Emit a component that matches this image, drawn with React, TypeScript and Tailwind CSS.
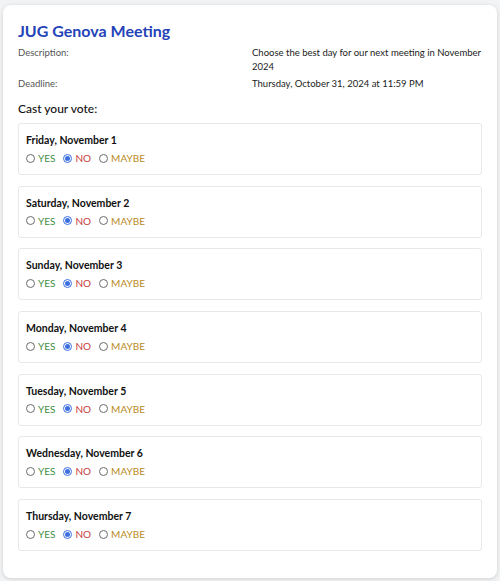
import React from "react"

const days = [
  "Friday, November 1",
  "Saturday, November 2",
  "Sunday, November 3",
  "Monday, November 4",
  "Tuesday, November 5",
  "Wednesday, November 6",
  "Thursday, November 7",
]

function Radio({ checked }: { checked?: boolean }) {
  if (checked) {
    return (
      <span className="inline-flex h-[9px] w-[9px] items-center justify-center rounded-full border border-[#3b6fe0] bg-white">
        <span className="h-[5px] w-[5px] rounded-full bg-[#3b6fe0]" />
      </span>
    )
  }
  return <span className="inline-block h-[9px] w-[9px] rounded-full border border-[#6b6b6b] bg-white" />
}

function Option({ label, color, checked }: { label: string; color: string; checked?: boolean }) {
  return (
    <label className="flex items-center gap-[3px]">
      <Radio checked={checked} />
      <span className={color}>{label}</span>
    </label>
  )
}

function DayCard({ day }: { day: string }) {
  return (
    <div className="h-[52px] rounded-[3px] border border-[#e8e8e8] bg-white px-[7px] pt-[8px]">
      <div className="text-[10.5px] font-bold leading-[16px] text-[#111]">{day}</div>
      <div className="mt-[2px] flex items-center gap-[8px] text-[10px] leading-[16px]">
        <Option label="YES" color="text-[#3f8f3f]" />
        <Option label="NO" color="text-[#c83c3c]" checked />
        <Option label="MAYBE" color="text-[#b98a24]" />
      </div>
    </div>
  )
}

export default function App() {
  return (
    <div className="min-h-[581px] bg-[#f2f3f5] px-[3px] pt-[5px] pb-[4px]" style={{ fontFamily: 'Lato, "Open Sans", sans-serif' }}>
      <div className="rounded-lg bg-white px-[15px] pt-[15px] pb-[27px] shadow-[0_1px_4px_rgba(0,0,0,0.15)]">
        <h1 className="text-[16px] font-bold leading-[22px] text-[#2443b8]">JUG Genova Meeting</h1>
        <div className="mt-[4px] grid grid-cols-2 gap-x-1 gap-y-[3px] text-[9.5px] leading-[14px]">
          <div className="text-[#555]">Description:</div>
          <div className="text-[#222]">Choose the best day for our next meeting in November 2024</div>
          <div className="text-[#555]">Deadline:</div>
          <div className="text-[#222]">Thursday, October 31, 2024 at 11:59 PM</div>
        </div>
        <h2 className="mt-[9px] text-[12px] font-medium leading-[18px] text-[#111]">Cast your vote:</h2>
        <div className="mt-[5px] flex flex-col gap-[10.7px]">
          {days.map((d) => (
            <DayCard key={d} day={d} />
          ))}
        </div>
      </div>
    </div>
  )
}
